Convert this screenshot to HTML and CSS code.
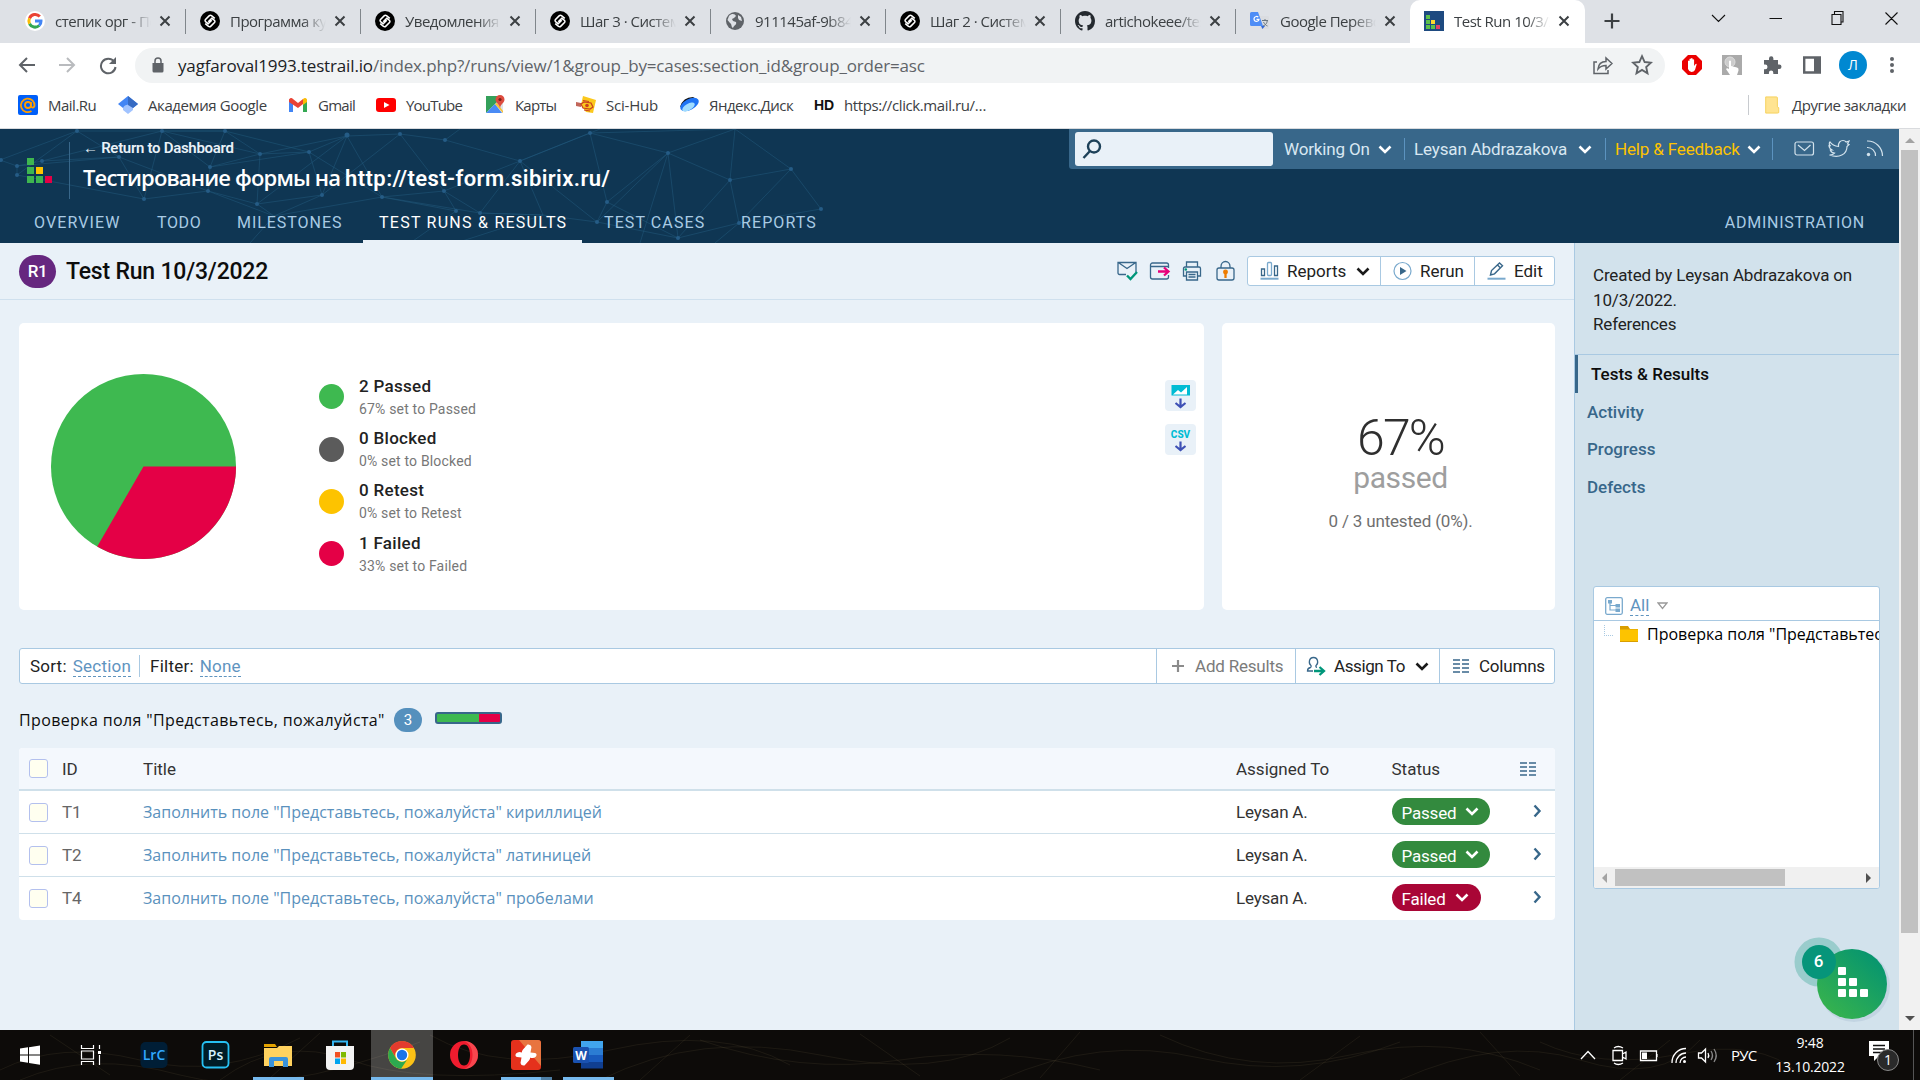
FILE: index.html
```html
<!DOCTYPE html>
<html lang="ru">
<head>
<meta charset="utf-8">
<title>Test Run 10/3/2022 - TestRail</title>
<link rel="stylesheet" href="styles.css">
</head>
<body>
<svg class="sprite" aria-hidden="true">
  <symbol id="stepik" viewBox="0 0 20 20"><circle cx="10" cy="10" r="10" fill="#000"/><path d="M14.800 7.300 11.500 4.600Q10.200 3.800 9.100 4.900L5.300 8.600Q4.500 10 5.800 10.900L8.200 12.700 11.800 9.300M5.200 12.700 8.500 15.400Q9.800 16.200 10.900 15.100L14.700 11.400Q15.500 10 14.200 9.100L11.800 7.300 8.200 10.700" fill="none" stroke="#fff" stroke-width="1.500"/></symbol>
  <symbol id="x" viewBox="0 0 12 12"><path d="M1.500 1.500l9 9M10.500 1.500l-9 9" stroke="#3c4043" stroke-width="2"/></symbol>
  <symbol id="chev" viewBox="0 0 14 9"><path d="M1.500 1.500 7 7l5.500-5.500" fill="none" stroke="currentColor" stroke-width="2.600"/></symbol>
  <symbol id="cols" viewBox="0 0 17 14"><path d="M0 1h7M9 1h7M0 5h7M9 5h7M0 9h7M9 9h7M0 13h7M9 13h7" stroke="#38678a" stroke-width="1.300"/></symbol>
</svg>

<div class="tabs">
  <div class="tab"><svg class="fav" viewBox="0 0 20 20"><circle cx="10" cy="10" r="10" fill="#fff"/><g fill="none" stroke-width="3"><path d="M14.800 5.500A6.200 6.200 0 0 0 4.500 7.300" stroke="#ea4335"/><path d="M4.500 7.300a6.300 6.300 0 0 0 0 5.400" stroke="#fbbc05"/><path d="M4.500 12.700a6.200 6.200 0 0 0 9.700 1.800" stroke="#34a853"/><path d="M14.200 14.500A6 6 0 0 0 16 10h-6" stroke="#4285f4"/></g></svg><span class="tab-text">степик орг - По</span><svg class="tab-x"><use href="#x"/></svg></div>
  <div class="tab"><svg class="fav"><use href="#stepik"/></svg><span class="tab-text">Программа курса</span><svg class="tab-x"><use href="#x"/></svg></div>
  <div class="tab"><svg class="fav"><use href="#stepik"/></svg><span class="tab-text">Уведомления</span><svg class="tab-x"><use href="#x"/></svg></div>
  <div class="tab"><svg class="fav"><use href="#stepik"/></svg><span class="tab-text">Шаг 3 · Система</span><svg class="tab-x"><use href="#x"/></svg></div>
  <div class="tab"><svg class="fav" viewBox="0 0 20 20"><circle cx="10" cy="10" r="9" fill="#5f6368"/><path d="M4 5c3-3 6-2 7 0l-2 2-2 1 1 2 3 1c1 3-2 3-3 6-2-1-1-4-3-5L2.500 9zM13 4l3 2 1 4-3-1-1-2z" fill="#dee1e6"/></svg><span class="tab-text">911145af-9b84-</span><svg class="tab-x"><use href="#x"/></svg></div>
  <div class="tab"><svg class="fav"><use href="#stepik"/></svg><span class="tab-text">Шаг 2 · Система</span><svg class="tab-x"><use href="#x"/></svg></div>
  <div class="tab"><svg class="fav" viewBox="0 0 16 16"><path fill="#24292f" d="M8 0C3.580 0 0 3.580 0 8c0 3.540 2.290 6.530 5.470 7.590.4.070.55-.17.55-.38 0-.19-.01-.82-.01-1.490-2.010.37-2.530-.49-2.690-.94-.09-.23-.48-.94-.82-1.130-.28-.15-.68-.52-.01-.53.63-.01 1.080.58 1.230.82.72 1.210 1.870.87 2.330.66.070-.52.28-.87.51-1.070-1.780-.2-3.640-.89-3.640-3.950 0-.87.31-1.590.82-2.150-.08-.2-.36-1.020.08-2.120 0 0 .67-.21 2.200.82.64-.18 1.320-.27 2-.27s1.360.09 2 .27c1.530-1.040 2.200-.82 2.200-.82.44 1.100.16 1.920.08 2.120.51.56.82 1.270.82 2.150 0 3.070-1.870 3.750-3.650 3.950.29.25.54.73.54 1.480 0 1.070-.01 1.930-.01 2.200 0 .21.15.46.55.38A8 8 0 0 0 16 8c0-4.420-3.580-8-8-8z"/></svg><span class="tab-text">artichokeee/test</span><svg class="tab-x"><use href="#x"/></svg></div>
  <div class="tab last"><svg class="fav" viewBox="0 0 20 20"><path d="M8 5h10a1 1 0 0 1 1 1v11a1 1 0 0 1-1 1h-7z" fill="#dadce0"/><path d="M12 9.500h6M15 8v1.500M13 15c3-1 4-3 4.300-5.500M13.500 11c1 2 2.500 3.500 4 4" stroke="#6b7780" fill="none"/><path d="M11 15h4l-2.500 3z" fill="#3367d6"/><path d="M1.500 1H8l5 14H1.500A1.500 1.500 0 0 1 0 13.500v-11A1.500 1.500 0 0 1 1.500 1z" fill="#4e8df6"/><path d="M8.300 6.200A2.500 2.500 0 1 0 9 8.300H6.500" stroke="#fff" fill="none" stroke-width="1.200"/></svg><span class="tab-text">Google Перевод</span><svg class="tab-x"><use href="#x"/></svg></div>
  <div class="tab active"><svg class="fav" viewBox="0 0 20 20"><path d="M0 0h20v20H0z" fill="#1e4a80"/><path d="M2 4h4v4H2zM2 9h4v4H2zM2 14h4v4H2zM7 14h4v4H7z" fill="#5dc04a"/><path d="M7 9h4v4H7z" fill="#ffd62e"/><path d="M12 14h4v4h-4z" fill="#e0426a"/></svg><span class="tab-text">Test Run 10/3/2</span><svg class="tab-x"><use href="#x"/></svg></div>
  <svg class="newtab" viewBox="0 0 16 16"><path d="M8 .5v15M.5 8h15" stroke="#3c4043" stroke-width="2.200"/></svg>
  <svg class="winctl" viewBox="0 0 200 20" fill="none" stroke="#111" stroke-width="1.100"><path d="M7 7l6.500 6.500L20 7M64.500 10.500H77M127 6.500h9v10h-9zM129.500 6v-2.500h8.500v10.500h-2M180.500 4.500l12 12M192.500 4.500l-12 12"/></svg>
</div>

<div class="toolbar">
  <svg class="navicons" viewBox="0 0 100 20" fill="none" stroke="#5f6368" stroke-width="2"><path d="M17 10H2M9 3l-7 7 7 7"/><path d="M41 10h15M49 3l7 7-7 7" stroke="#b9bbbe"/><path d="M96 6.500A7.300 7.300 0 1 0 97.500 12"/><path d="M98 2v7h-7z" fill="#5f6368" stroke="none"/></svg>
  <div class="omnibox">
    <svg class="lock" viewBox="0 0 12 16"><path d="M.5 6h11v8a1.500 1.500 0 0 1-1.500 1.500H2A1.500 1.500 0 0 1 .5 14z" fill="#5f6368"/><path d="M3 6.500V4a3 3 0 0 1 6 0v2.500" fill="none" stroke="#5f6368" stroke-width="1.500"/></svg>
    <span class="url"><b>yagfaroval1993.testrail.io</b>/index.php?/runs/view/1&amp;group_by=cases:section_id&amp;group_order=asc</span>
    <svg class="share" viewBox="0 0 20 20" fill="none" stroke="#5f6368" stroke-width="1.500"><path d="M4 7H1v11.500h14V15M5 14c.5-5 3.500-7.500 8-7.500V3l6 5.500-6 5.500v-3.500c-4 0-6 1-8 3.500z"/></svg>
    <svg class="star" viewBox="0 0 20 20" fill="none" stroke="#5f6368" stroke-width="1.700"><path d="M10 2l2.400 5.300 5.700.6-4.300 3.900 1.200 5.700-5-3-5 3 1.200-5.700L1.900 7.900l5.700-.6z"/></svg>
  </div>
  <div class="exts">
    <svg viewBox="0 0 20 20"><path d="M6 0h8l6 6v8l-6 6H6l-6-6V6z" fill="#eb0000"/><path d="M6 10V6q.8-1 1.500 0V4q.8-1 1.500 0V3.500q.8-1 1.600 0V4.500q.9-.8 1.500.3V11l1.500-2q1.200-.5 1 .6L13 15q-1.200 2-3.500 2T6 14z" fill="#fff"/></svg>
    <svg viewBox="0 0 20 20"><path d="M0 0h20v20H0z" fill="#aaa"/><circle cx="8" cy="7" r="5" fill="#ccc" stroke="#ddd"/><path d="M7 6q1-1 2 0v5l6 1.500q2 .5 1.500 3L15 20H8l-4-6q1-1.500 3 0z" fill="#fff"/></svg>
    <svg viewBox="0 0 20 20"><path d="M2 5h5V3.500a2.200 2.200 0 0 1 4.400 0V5H16v4.500h1.300a2.200 2.200 0 0 1 0 4.400H16V19h-4.700v-1.200a2.200 2.200 0 0 0-4.400 0V19H2v-4.800h1.200a2.300 2.300 0 0 0 0-4.600H2z" fill="#5f6368"/></svg>
    <svg viewBox="0 0 20 20"><path d="M2.200 2.500h15.600v15H2.200z" fill="none" stroke="#5f6368" stroke-width="2.400"/><path d="M12 2h6v16h-6z" fill="#5f6368"/></svg>
    <span class="avatar">Л</span>
    <svg viewBox="0 0 20 20" fill="#5f6368"><circle cx="10" cy="4" r="2"/><circle cx="10" cy="10" r="2"/><circle cx="10" cy="16" r="2"/></svg>
  </div>
</div>

<div class="bookmarks">
  <div class="bm bm-mail"><svg viewBox="0 0 20 20"><rect width="20" height="20" rx="2" fill="#005ff9"/><circle cx="10" cy="10" r="3" fill="none" stroke="#ff9e00" stroke-width="1.800"/><path d="M13 7v4.500q2 2.500 3.500-.5a6.800 6.800 0 1 0-3 5" fill="none" stroke="#ff9e00" stroke-width="1.800"/></svg><span>Mail.Ru</span></div>
  <div class="bm bm-scholar"><svg viewBox="0 0 20 20"><path d="M5 10h10v5l-5 4-5-4z" fill="#a0c3ff"/><path d="M10 1l10 8-5 4a5.500 5.500 0 0 0-10 0L0 9z" fill="#4285f4"/><path d="M10 1l10 8-5 4-5-3z" fill="#356ac3"/></svg><span>Академия Google</span></div>
  <div class="bm bm-gmail"><svg viewBox="0 0 20 20"><path d="M1 4v13h4V9z" fill="#4285f4"/><path d="M19 4v13h-4V9z" fill="#34a853"/><path d="M1 4.500Q3 2 5 4l5 4 5-4v5l-5 4-9-6z" fill="#ea4335"/><path d="M15 4q2.500-2 4 .5V7l-4 3z" fill="#fbbc04"/></svg><span>Gmail</span></div>
  <div class="bm bm-youtube"><svg viewBox="0 0 20 20"><rect y="3" width="20" height="14" rx="3" fill="#f00"/><path d="M8 7l5.500 3L8 13z" fill="#fff"/></svg><span>YouTube</span></div>
  <div class="bm bm-maps"><svg viewBox="0 0 20 20"><path d="M1 1h14v17H1z" fill="#34a05a"/><path d="M1 18L15 4l3 4v10z" fill="#dfe3e6"/><path d="M1 18l9-9 7 9z" fill="#4a8bf5"/><path d="M10 9l8 9V16l-6-8z" fill="#fbc02d"/><path d="M15 0a4.500 4.500 0 0 1 4.500 4.500C19.500 8 15.500 9 15 13c-.5-4-4.500-5-4.500-8.500A4.500 4.500 0 0 1 15 0z" fill="#dd4b3e"/><circle cx="15" cy="4.500" r="1.600" fill="#7a1f17"/></svg><span>Карты</span></div>
  <div class="bm bm-scihub"><svg viewBox="0 0 20 20"><path d="M7 1l13 4-3 13-7-1-5-7z" fill="#fbc81c"/><path d="M0 7l5 1v4l-5-1z" fill="#c2665a"/><path d="M5 9l3-2 7 1 2 4-3 2-7-1z" fill="none" stroke="#c8401f" stroke-width="1.200"/><circle cx="11" cy="10.500" r="1.800" fill="#c8401f"/><path d="M7 5.500l6 1M8 15l6 1" stroke="#c8401f"/></svg><span>Sci-Hub</span></div>
  <div class="bm bm-disk"><svg viewBox="0 0 20 20"><path d="M1 12Q4 2 14 2l5 3z" fill="#111"/><ellipse cx="10.500" cy="9.500" rx="10" ry="5.500" transform="rotate(-28 10.500 9.500)" fill="#1f74f5"/><ellipse cx="9.500" cy="12" rx="7" ry="3.300" transform="rotate(-30 9.500 12)" fill="#9fdcff"/></svg><span>Яндекс.Диск</span></div>
  <div class="bm"><span class="hd">HD</span><span>https://click.mail.ru/…</span></div>
  <div class="bm others"><svg viewBox="0 0 16 20"><path d="M1 1h12a1 1 0 0 1 1 1v10l1.500 1v5.500L14 19H1z" fill="#ffe491" stroke="#f5cf55"/></svg><span>Другие закладки</span></div>
</div>

<div class="viewport">
<div class="page">
  <div class="header">
    <svg class="mesh" viewBox="0 0 840 114" width="840" height="114"><g fill="none" stroke="#20577a" stroke-opacity=".55" stroke-width="1"><path d="M0 31 77 2 17 46 17 37 42 32 162 2 77 2 119 28 42 32M0 31 17 37 119 28 144 70 162 2 210 38 225 2 162 2 260 25 225 2 309 23 260 25 210 38 208 62 119 28M144 70 208 62 257 75 260 25 347 7 309 23 210 38M208 62 274 87 257 75 347 7 322 66 309 23 382 68M274 87 322 66 400 5 347 7M225 2 162 2M400 5 445 11 520 32 444 62 382 68 347 7M400 5 444 62 456 82 382 68 480 84 520 32 543 86 480 84 444 62M382 68 274 87 250 114M456 82 410 114M480 84 543 86 597 93 520 32 590 4 607 73 597 93M445 11 460 0M590 4 520 32M590 4 668 24 607 73M590 4 735 0 668 24 730 51 791 40 735 0 730 51 678 109 668 24 640 114M791 40 821 80 739 94 791 40M730 51 739 94 678 109 607 73M739 94 715 114M597 93 678 109M543 86 456 114M590 4 600 0M144 70 17 46M257 75 322 66M668 24 597 93"/></g><g fill="#255c86"><circle cx="77" cy="2" r="2"/><circle cx="162" cy="2" r="2"/><circle cx="225" cy="2" r="2"/><circle cx="347" cy="6" r="2.500"/><circle cx="1" cy="31" r="2"/><circle cx="17" cy="37" r="2"/><circle cx="42" cy="32" r="2"/><circle cx="17" cy="46" r="2"/><circle cx="119" cy="28" r="2"/><circle cx="260" cy="25" r="2"/><circle cx="309" cy="23" r="2"/><circle cx="210" cy="38" r="2"/><circle cx="208" cy="62" r="2"/><circle cx="144" cy="70" r="2"/><circle cx="257" cy="75" r="2"/><circle cx="322" cy="66" r="2"/><circle cx="400" cy="5" r="2"/><circle cx="445" cy="11" r="2"/><circle cx="520" cy="32" r="2"/><circle cx="444" cy="62" r="2"/><circle cx="382" cy="68" r="2"/><circle cx="456" cy="82" r="2"/><circle cx="480" cy="84" r="2"/><circle cx="590" cy="4" r="2"/><circle cx="607" cy="73" r="2"/><circle cx="597" cy="93" r="2"/><circle cx="668" cy="24" r="2"/><circle cx="791" cy="40" r="2"/><circle cx="730" cy="51" r="2"/><circle cx="821" cy="80" r="2"/><circle cx="739" cy="94" r="2"/><circle cx="678" cy="109" r="2"/></g></svg>
    <div class="brand">
      <svg class="logo" viewBox="0 0 25 25"><path d="M0 0h7v7H0zM0 9h7v7H0zM0 18h7v7H0zM9 18h7v7H9z" fill="#3eb650"/><path d="M9 9h7v7H9z" fill="#fdc300"/><path d="M18 18h7v7h-7z" fill="#e40046"/></svg>
      <div class="brand-text">
        <a class="return">← Return to Dashboard</a>
        <div class="project"><span class="cyr">Тестирование формы на</span><span>http://test-form.sibirix.ru/</span></div>
      </div>
    </div>
    <div class="topbar">
      <div class="search"><svg viewBox="0 0 20 20" fill="none" stroke="#1d4159" stroke-width="2.400"><circle cx="12" cy="7.500" r="6"/><path d="M8 12l-6.500 7"/></svg></div>
      <div class="tb-item working"><span>Working On</span><svg class="chev"><use href="#chev"/></svg></div>
      <div class="tb-item user"><span>Leysan Abdrazakova</span><svg class="chev"><use href="#chev"/></svg></div>
      <div class="tb-item help"><span>Help &amp; Feedback</span><svg class="chev"><use href="#chev"/></svg></div>
      <svg class="social" viewBox="0 0 92 20" fill="none" stroke="#d2e2ec" stroke-width="1.200"><rect x="1" y="3" width="18.500" height="13" rx="2"/><path d="M4 6l6.500 5.500L16.500 6M36 3c2 3 4 4 8.500 4.500-.5-4 2-6 4.500-6 1.500 0 2.500.7 3.200 1.500L55 2l-1.500 3 1.500.5-2 2c0 8-8 12-17.500 8.500 2 0 4-.5 5-1.800-2-.2-3.500-1.200-4.200-3.200h1.800C36.500 10 35 8.500 35 6.500l1.600.5C35 5.500 35 4 36 3zM73 8.500A8 8 0 0 1 81.500 17M73 2a15 15 0 0 1 15.500 15"/><circle cx="74.500" cy="15.500" r="1.700" fill="#d2e2ec" stroke="none"/></svg>
    </div>
    <div class="nav">
      <a class="n-over">OVERVIEW</a><a class="n-todo">TODO</a><a class="n-mile">MILESTONES</a><a class="on">TEST RUNS &amp; RESULTS</a><a class="n-cases">TEST CASES</a><a>REPORTS</a><a class="admin">ADMINISTRATION</a>
    </div>
  </div>

  <div class="body">
    <div class="main">
      <div class="pagehead">
        <span class="rbadge">R1</span><h1>Test Run 10/3/2022</h1>
        <svg class="acts" viewBox="0 0 120 24" fill="none" stroke="#38678a" stroke-width="1.300"><path d="M9 15.500H2.500A1.500 1.500 0 0 1 1 14V3.500h18V13M2 4l8 5.500L18 4"/><path d="M10 16.500l3.500 3.500 6.500-7" stroke="#00967a" stroke-width="2.400"/><path d="M51.500 9V6a2 2 0 0 0-2-2h-14a2 2 0 0 0-2 2v12a2 2 0 0 0 2 2h14a2 2 0 0 0 2-2v-2M33.500 7.500h18"/><path d="M41 12.500h9.500M47 8.500l4.500 4-4.500 4" stroke="#e6007a" stroke-width="2.300"/><path d="M69.500 8V3h11v5M69 17h-2.500V9.500Q66.500 8 68 8h14q1.500 0 1.500 1.500V17H81M69.500 13h11v8h-11zM71.500 15.500h7M71.500 18h7"/><circle cx="68.800" cy="10.500" r=".7" stroke="#00967a"/><rect x="100" y="9" width="17" height="12" rx="2"/><path d="M104 9V7.500a4.500 5 0 0 1 9 0V9"/><circle cx="108.500" cy="13" r="1.800" fill="#ee7d00" stroke="#ee7d00"/><path d="M108.500 13v6" stroke="#ee7d00" stroke-width="2.300"/></svg>
        <div class="btns">
          <div class="b-reports"><svg viewBox="0 0 19 20" fill="none"><path d="M1.500 8h3v6.500h-3z M14.500 5h3v9.500h-3z" stroke="#38678a" stroke-width="1.300"/><rect x="7.500" y="1.500" width="4" height="13" rx="1" stroke="#79a9cd" stroke-width="1.300"/><path d="M.5 17.700h18" stroke="#79a9cd" stroke-width="2"/></svg><span>Reports</span><svg class="chev"><use href="#chev"/></svg></div>
          <div class="b-rerun"><svg viewBox="0 0 19 19"><circle cx="9.500" cy="9.500" r="8.500" fill="none" stroke="#79a9cd" stroke-width="1.200"/><path d="M7 5.500l6.500 4-6.500 4z" fill="#38678a"/></svg><span>Rerun</span></div>
          <div class="b-edit"><svg viewBox="0 0 19 20" fill="none"><path d="M3.500 14l1-4.500 8-7.500 3 2.800-8 8zM10.500 4l3 3" stroke="#38678a" stroke-width="1.400"/><path d="M.5 17.700h18" stroke="#79a9cd" stroke-width="2"/></svg><span>Edit</span></div>
        </div>
      </div>

      <div class="cards">
        <div class="card chart">
          <svg class="pie" viewBox="-92.500 -92.500 185 185"><circle r="92.500" fill="#3eb950"/><path d="M0 0H92.500A92.500 92.500 0 0 1-46.250 80.100z" fill="#e40046"/></svg>
          <div class="legend">
            <div><i class="c-pass"></i><p><b>2 Passed</b><small>67% set to Passed</small></p></div>
            <div><i class="c-block"></i><p><b>0 Blocked</b><small>0% set to Blocked</small></p></div>
            <div><i class="c-retest"></i><p><b>0 Retest</b><small>0% set to Retest</small></p></div>
            <div><i class="c-fail"></i><p><b>1 Failed</b><small>33% set to Failed</small></p></div>
          </div>
          <div class="exports">
            <svg viewBox="0 0 31 31"><path d="M6.500 5h18.500v10.500H6.500z" fill="#00bcd4"/><path d="M8 14.500l5-4.500 3 2.500 6-5.500v7.500z" fill="#fff"/><path d="M15.500 18.500v8M10.500 23l5 4 5-4" fill="none" stroke="#3f51b5" stroke-width="2.200"/></svg>
            <svg viewBox="0 0 31 31"><text x="15.500" y="14.300" text-anchor="middle" class="csv">CSV</text><path d="M15.500 17.500v8M10.500 22l5 4 5-4" fill="none" stroke="#3f51b5" stroke-width="2.200"/></svg>
          </div>
        </div>
        <div class="card pct"><strong>67%</strong><em>passed</em><p>0 / 3 untested (0%).</p></div>
      </div>

      <div class="gridbar">
        <span>Sort:</span><a>Section</a><i></i><span>Filter:</span><a>None</a>
        <div class="gb add"><svg viewBox="0 0 14 14"><path d="M7 1v12M1 7h12" stroke="#8b8b8b" stroke-width="2.200"/></svg><span>Add Results</span></div>
        <div class="gb assign"><svg viewBox="0 0 20 20" fill="none"><path d="M7 15H1.500q0-3 3-3.500Q5.500 11 5 9.500C2.500 8 2.500 1.500 7.500 1.500S12.500 8 10 9.500q-.5 1.500 1 2" stroke="#38678a" stroke-width="1.300"/><path d="M8 15h9M13.500 11l4.500 4-4.500 4" stroke="#00967a" stroke-width="2.300"/></svg><span>Assign To</span><svg class="chev"><use href="#chev"/></svg></div>
        <div class="gb colsbtn"><svg><use href="#cols"/></svg><span>Columns</span></div>
      </div>

      <div class="grouphead"><h2 class="cyr">Проверка поля "Представьтесь, пожалуйста"</h2><span class="count">3</span><span class="mini"></span></div>

      <div class="table">
        <div class="row head"><i class="cb"></i><span>ID</span><span>Title</span><span>Assigned To</span><span>Status</span><svg class="cols"><use href="#cols"/></svg></div>
        <div class="row"><i class="cb"></i><span class="id">T1</span><a class="cyr">Заполнить поле "Представьтесь, пожалуйста" кириллицей</a><span>Leysan A.</span><span class="pill"><b>Passed</b><svg class="chev"><use href="#chev"/></svg></span><svg class="go" viewBox="0 0 9 14"><path d="M1.500 1.500l5 5.500-5 5.500" fill="none" stroke="#38678a" stroke-width="2.400"/></svg></div>
        <div class="row"><i class="cb"></i><span class="id">T2</span><a class="cyr">Заполнить поле "Представьтесь, пожалуйста" латиницей</a><span>Leysan A.</span><span class="pill"><b>Passed</b><svg class="chev"><use href="#chev"/></svg></span><svg class="go" viewBox="0 0 9 14"><path d="M1.500 1.500l5 5.500-5 5.500" fill="none" stroke="#38678a" stroke-width="2.400"/></svg></div>
        <div class="row"><i class="cb"></i><span class="id">T4</span><a class="cyr">Заполнить поле "Представьтесь, пожалуйста" пробелами</a><span>Leysan A.</span><span class="pill failed"><b>Failed</b><svg class="chev"><use href="#chev"/></svg></span><svg class="go" viewBox="0 0 9 14"><path d="M1.500 1.500l5 5.500-5 5.500" fill="none" stroke="#38678a" stroke-width="2.400"/></svg></div>
      </div>
    </div>

    <div class="side">
      <div class="info">Created by Leysan Abdrazakova on<br>10/3/2022.<br>References</div>
      <a class="sl on">Tests &amp; Results</a><a class="sl">Activity</a><a class="sl">Progress</a><a class="sl">Defects</a>
      <div class="tree">
        <div class="treehead"><svg viewBox="0 0 18 18" fill="none" stroke="#79a9cd"><rect x=".7" y=".7" width="16.600" height="16.600" rx="1.500" stroke-width="1.300"/><path d="M5 5v8h6M5 8.500h6" stroke-width="1.200"/><path d="M3 3h4v3.500H3zM10.500 7H15v3.500h-4.500zM10.500 11.500H15V15h-4.500z" fill="#79a9cd" stroke="none"/></svg><a>All</a><svg class="tri" viewBox="0 0 11 8"><path d="M1 1h9L5.500 6.500z" fill="none" stroke="#999" stroke-width="1.300"/></svg></div>
        <div class="treeitem"><i></i><svg viewBox="0 0 18 16"><path d="M0 0h8l2 3h8v13H0z" fill="#d99e00"/><path d="M0 3.500h18V15H0z" fill="#fdc300"/></svg><span class="cyr">Проверка поля "Представьтесь, пожалуйста"</span></div>
        <div class="hscroll"><i class="l"></i><b></b><i class="r"></i></div>
      </div>
    </div>
  </div>
  <svg class="fab" viewBox="0 0 110 100"><defs><linearGradient id="g" x1=".15" y1=".9" x2=".85" y2=".1"><stop offset="0" stop-color="#36b24e"/><stop offset="1" stop-color="#06956f"/></linearGradient></defs><circle cx="28" cy="32" r="24.500" fill="#06957a" fill-opacity=".28"/><circle cx="63" cy="56" r="36" fill="#5a7fa0" fill-opacity=".13"/><circle cx="61" cy="54" r="35" fill="url(#g)"/><g fill="#fff"><rect x="47" y="37" width="8" height="8" rx="1"/><rect x="47" y="48" width="8" height="8" rx="1"/><rect x="58" y="48" width="8" height="8" rx="1"/><rect x="47" y="59" width="8" height="8" rx="1"/><rect x="58" y="59" width="8" height="8" rx="1"/><rect x="69" y="59" width="8" height="8" rx="1"/></g><circle cx="28" cy="32" r="17" fill="#06957a"/><text x="27.500" y="37" text-anchor="middle" class="fabn">6</text></svg>
</div>
<div class="vscroll"><i class="up"></i><b></b><i class="down"></i></div>
</div>

<div class="taskbar">
  <svg class="grass" viewBox="0 0 1920 50" preserveAspectRatio="none" fill="none" stroke="#8b7a55" stroke-opacity=".13"><path d="M0 40Q60 10 140 30T300 8M20 50Q90 20 180 45T420 12M220 50Q280 5 350 30T560 40M430 5Q500 45 610 20T790 35M600 50Q700 0 820 25T1010 8M700 10Q800 45 900 30T1100 40M1000 50Q1100 5 1200 28T1400 12M1160 5Q1250 48 1350 25T1540 40M1400 50Q1500 5 1580 30T1700 10M1540 12Q1600 40 1680 24T1800 44M50 5l60 40M320 3l-50 45M640 50l50-45M860 4l60 42M1080 2l-40 46M1300 50l60-44M1480 2l40 44M1620 50l50-40"/></svg>
  <div class="apps">
    <div class="app"><svg viewBox="0 0 30 30"><path d="M5 8.500l8-1.200V14.500H5zM14 7.200l11-1.700v9H14zM5 15.500h8v7.200l-8-1.200zM14 15.500h11v9.200l-11-1.800z" fill="#fff"/></svg></div>
    <div class="app"><svg viewBox="0 0 30 30" fill="none" stroke="#fff" stroke-width="1.200"><path d="M4.500 5v3.500h12V5M4.500 25v-3.500h12V25M4.500 11h12v8h-12zM22.500 5v4M22.500 15v10"/><path d="M21 11h3v3h-3z" fill="#fff" stroke="none"/></svg></div>
    <div class="app"><svg viewBox="0 0 30 30"><rect x="1.500" y="2" width="27" height="26" rx="5" fill="#001e36"/><text x="15" y="20" text-anchor="middle" class="adobe lr">LrC</text></svg></div>
    <div class="app"><svg viewBox="0 0 30 30"><rect x="1.500" y="2" width="26" height="25.500" rx="4" fill="#001c26" stroke="#26c0f2" stroke-width="1.800"/><text x="14.500" y="20" text-anchor="middle" class="adobe">Ps</text></svg></div>
    <div class="app run"><svg viewBox="0 0 30 30"><path d="M1 4h11l2 3H1z" fill="#e2a200"/><path d="M1 8h13l2-2h13v20H1z" fill="#ffd25f"/><path d="M6 27v-8q0-2 2-2h15q2 0 2 2v8h-5v-6h-9v6z" fill="#3b93db"/></svg></div>
    <div class="app"><svg viewBox="0 0 30 30"><path d="M8 8V1.500h14V8" fill="none" stroke="#35b6f2" stroke-width="2"/><path d="M1 6h28v20q0 4-4 4H5q-4 0-4-4z" fill="#f3f3f3"/><path d="M10 12h5v5.500h-5z" fill="#f25022"/><path d="M16 12h5v5.500h-5z" fill="#7fba00"/><path d="M10 18.500h5V24h-5z" fill="#00a4ef"/><path d="M16 18.500h5V24h-5z" fill="#ffb900"/></svg></div>
    <div class="app cur"><svg viewBox="0 0 30 30"><circle cx="15" cy="15" r="13.800" fill="#fbc116"/><path d="M3 8.100A13.800 13.800 0 0 1 27 8.100H15a7 7 0 0 0-6.200 10z" fill="#e33b2e"/><path d="M3 8.100A13.800 13.800 0 0 0 14 28.800l6.500-9.500a7 7 0 0 1-11.600-1z" fill="#2da94f"/><circle cx="15" cy="15" r="6.500" fill="#fff"/><circle cx="15" cy="15" r="5.200" fill="#1a73e8"/></svg></div>
    <div class="app"><svg viewBox="0 0 30 30"><path fill-rule="evenodd" d="M15 1a14 14 0 1 0 0 28 14 14 0 0 0 0-28zm0 3.500c4 0 6 5 6 10.500s-2 10.500-6 10.500S9 20.500 9 15 11 4.500 15 4.500z" fill="#ef1c2e"/><path d="M15 1a14 14 0 0 1 0 28c6-2 8.500-8 8.500-14S21 3 15 1z" fill="#ff6a6a" fill-opacity=".55"/></svg></div>
    <div class="app run two"><svg viewBox="0 0 30 30"><rect width="30" height="30" rx="3" fill="#e5311c"/><path d="M8 0h19q3 0 3 3v23z" fill="#e8743f"/><path d="M16.500 4.500q3.500-.5 4 2.500l-1 5.500 4.500.5q2.500.8 1 3.500-2.500 2.500-6 1l-6.500-2.500q-3-2.500-.5-5.500zM13.500 25.500q-3.500.5-4-2.500l1-5.500L6 17q-2.500-.8-1-3.500 2.500-2.500 6-1l6.500 2.500q3 2.500.5 5.500z" fill="#fff"/></svg></div>
    <div class="app run"><svg viewBox="0 0 30 30"><path d="M8 1h22v7H8z" fill="#41a5ee"/><path d="M8 8h22v7H8z" fill="#2b7cd3"/><path d="M8 15h22v7H8z" fill="#185abd"/><path d="M8 22h22v6.500H8z" fill="#103f91"/><rect x="0" y="7" width="16" height="16" rx="1.500" fill="#1a52b0"/><text x="8" y="19.500" text-anchor="middle" class="wd">W</text></svg></div>
  </div>
  <svg class="tray" viewBox="0 0 144 24" fill="none" stroke="#fff" stroke-width="1.300"><path d="M1 16l7-7.500 7 7.500M33 7.500h9.500v10H33zM42.500 11l3.500-2v7l-3.500-2M34 5q4-3 9 0M34 20q4 3 9 0M60.500 8h16v9.500h-16zM77 11v3"/><path d="M62 9.500h5v6.500h-5z" fill="#fff" stroke="none"/><path d="M92 20A14 14 0 0 1 106 5.500M96 20a10 10 0 0 1 10-10M100 20a6 6 0 0 1 6-6"/><circle cx="104.500" cy="18.500" r="1.500" fill="#fff" stroke="none"/><path d="M118.500 10h3l4-4v13l-4-4h-3zM128 10q1.500 2.500 0 5"/><path d="M131 8q3 4.500 0 9M134 6q4.500 6.500 0 13" stroke="#888"/></svg>
  <span class="lang">РУС</span>
  <div class="clock"><span>9:48</span><span>13.10.2022</span></div>
  <svg class="notif" viewBox="0 0 34 34"><path d="M2 3h20v15H12l-5 5v-5H2z" fill="#fff"/><path d="M6 7.500h12M6 11h12M6 14.500h8" stroke="#111" stroke-width="1.300"/><circle cx="21" cy="22" r="10.500" fill="#2a2a2a" stroke="#888"/><text x="21" y="27" text-anchor="middle" class="nn">1</text></svg>
  <i class="peek"></i>
</div>
</body>
</html>
```
FILE: styles.css
```css
* { box-sizing: border-box; }
body { margin: 0; width: 1920px; height: 1080px; overflow: hidden; display: flex; flex-direction: column; font-family: Roboto, "Liberation Sans", sans-serif; font-size: 17px; background: #fff; color: #202124; }
svg { display: block; flex: none; }
a { text-decoration: none; }
.sprite { position: absolute; width: 0; height: 0; }
.cyr { font-family: "Open Sans", "Noto Sans", sans-serif; }

/* browser chrome */
.tabs, .toolbar, .bookmarks, .taskbar { font-family: "Open Sans", "Noto Sans", sans-serif; }
.tabs { height: 43px; background: #dee1e6; display: flex; align-items: center; padding-left: 11px; flex: none; }
.tab { width: 175px; height: 43px; display: flex; align-items: center; padding: 0 14px 2px; position: relative; flex: none; }
.tab::after { content: ""; position: absolute; right: 0; top: 9px; width: 1px; height: 25px; background: #80868b; }
.tab.last::after, .tab.active::after { display: none; }
.fav { width: 20px; height: 20px; }
.tab-text { width: 96px; margin-left: 10px; font-size: 15px; letter-spacing: -0.5px; white-space: nowrap; overflow: hidden; color: #3c4043; -webkit-mask-image: linear-gradient(90deg, #000 75%, transparent); mask-image: linear-gradient(90deg, #000 75%, transparent); }
.tab-x { width: 12px; height: 12px; margin-left: 8px; }
.tab.active { background: #fff; border-radius: 10px 10px 0 0; margin-left: -1px; }
.newtab { width: 16px; height: 16px; margin: 0 0 2px 19px; }
.winctl { width: 200px; height: 20px; margin: 0 15px 7px auto; }
.toolbar { height: 44px; display: flex; align-items: center; padding-left: 18px; flex: none; }
.navicons { width: 100px; height: 20px; }
.omnibox { width: 1530px; height: 35px; margin-left: 17px; background: #f1f3f4; border-radius: 18px; display: flex; align-items: center; padding-left: 17px; }
.lock { width: 12px; height: 16px; }
.url { margin-left: 14px; font-size: 17px; letter-spacing: -0.15px; color: #5f6368; }
.url b { font-weight: 400; color: #202124; }
.share { width: 20px; height: 20px; margin-left: auto; }
.star { width: 22px; height: 22px; margin: 0 12px 0 18px; }
.exts { display: flex; align-items: center; gap: 20px; margin-left: 17px; }
.exts svg { width: 20px; height: 20px; }
.exts svg:last-child { margin-left: -3px; }
.avatar { width: 28px; height: 28px; border-radius: 50%; background: #0088d1; color: #fff; font-size: 14px; line-height: 28px; text-align: center; margin: 0 -2px 0 -3px; }
.bookmarks { height: 42px; border-bottom: 1px solid #d9dbde; display: flex; align-items: center; padding: 0 14px 6px 18px; flex: none; font-size: 15px; }
.bm { display: flex; align-items: center; gap: 10px; white-space: nowrap; color: #3c4043; letter-spacing: -0.5px; flex: none; }
.bm svg { width: 20px; height: 20px; }
.bm-mail { width: 100px; }
.bm-scholar { width: 170px; letter-spacing: -0.4px; }
.bm-gmail { width: 88px; letter-spacing: -0.75px; }
.bm-youtube { width: 109px; letter-spacing: -0.8px; }
.bm-maps { width: 91px; letter-spacing: -0.8px; }
.bm-scihub { width: 103px; letter-spacing: -0.2px; }
.bm-disk { width: 135px; }
.bm:nth-child(8) { letter-spacing: -0.4px; }
.hd { font-family: "Liberation Sans", sans-serif; font-weight: 700; font-size: 14px; color: #111; width: 20px; letter-spacing: 0; }
.others { margin-left: auto; border-left: 1px solid #c8cbcf; padding-left: 15px; gap: 12px; }
.others svg { width: 16px; height: 18px; }

/* page */
.viewport { display: flex; height: 901px; flex: none; }
.page { width: 1899px; display: flex; flex-direction: column; position: relative; }
.header { height: 114px; background: #0f3653; position: relative; display: grid; grid-template: 70px 44px / 1069px 830px; flex: none; }
.mesh { position: absolute; left: 0; top: 0; }
.brand { display: flex; padding-left: 27px; position: relative; }
.logo { width: 25px; height: 25px; margin: 29px 17px 0 0; }
.brand-text { border-left: 1px solid #38678a; height: 57px; margin-top: 13px; padding-left: 13px; }
.return { display: block; color: #e9f1f8; font-weight: 600; font-size: 15px; line-height: 18px; letter-spacing: -0.3px; margin-top: -3px; white-space: nowrap; }
.project { color: #fff; font-weight: 600; font-size: 22px; line-height: 26px; letter-spacing: 0.4px; margin-top: 7px; white-space: nowrap; display: flex; align-items: baseline; gap: 5px; }
.project .cyr { letter-spacing: -0.84px; }
.topbar { height: 40px; background: #38678a; display: flex; align-items: center; padding-left: 6px; border-radius: 0 0 0 3px; }
.search { width: 198px; height: 34px; border-radius: 3px; background: #e9f1f8; padding: 7px; margin-right: 1px; }
.search svg { width: 20px; height: 20px; }
.tb-item { display: flex; align-items: center; height: 22px; padding-left: 9px; border-right: 1px solid #5c93bf; color: #d9e7f2; letter-spacing: -0.15px; white-space: nowrap; flex: none; }
.chev { width: 14px; height: 9px; margin-left: 8px; color: #fff; }
.working { width: 131px; padding-left: 10px; }
.user { width: 201px; }
.user .chev { margin-left: 11px; }
.help { width: 167px; color: #fdc300; }
.help .chev { margin-left: 7px; }
.social { width: 92px; height: 20px; margin-left: 21px; }
.nav { grid-column: 1 / 3; display: flex; padding-left: 18px; position: relative; color: #a9cbe4; font-size: 16px; line-height: 48px; letter-spacing: 1.1px; white-space: nowrap; }
.nav a { flex: none; height: 44px; padding-left: 16px; }
.n-over { width: 123px; }
.n-todo { width: 80px; letter-spacing: 0.6px; }
.n-mile { width: 142px; letter-spacing: 0.95px; }
.n-cases { width: 137px; }
.nav .on { width: 219px; margin-right: 6px; letter-spacing: 1.25px; color: #fff; border-bottom: 3px solid #e9f1f8; }
.nav .admin { margin-left: auto; padding-right: 34px; letter-spacing: 0.75px; }
.body { flex: 1; display: flex; background: #e9f1f8; }
.main { width: 1574px; display: flex; flex-direction: column; }
.pagehead { height: 57px; border-bottom: 1px solid #cfe0ee; display: flex; align-items: center; padding: 0 19px; flex: none; }
.rbadge { width: 37px; height: 33px; border-radius: 17px; background: #66277f; color: #fff; font-weight: 500; font-size: 17px; line-height: 33px; text-align: center; letter-spacing: -0.5px; }
h1 { margin: 1px 0 0 10px; font-weight: 500; font-size: 23px; letter-spacing: -0.2px; color: #0d0d0d; }
.acts { width: 120px; height: 24px; margin: 0 10px 0 auto; }
.btns { display: flex; height: 30px; border: 1px solid #a9c9e2; border-radius: 3px; background: #fff; color: #222; }
.btns > div { display: flex; align-items: center; padding-left: 12px; }
.btns > div + div { border-left: 1px solid #a9c9e2; }
.b-reports { width: 132px; }
.b-rerun { width: 94px; }
.b-edit { width: 80px; }
.btns svg:first-child { width: 19px; height: 20px; margin-right: 8px; }
.btns .chev, .assign .chev { color: #1a1a1a; margin-left: 10px; }
.cards { display: flex; gap: 18px; padding: 23px 19px 0; }
.card { background: #fff; border-radius: 5px; height: 287px; }
.chart { width: 1185px; display: flex; padding-left: 32px; }
.pie { width: 185px; height: 185px; margin-top: 51px; }
.legend { margin: 48px 0 0 83px; display: flex; flex-direction: column; }
.legend > div { display: flex; align-items: center; height: 52.400px; }
.legend i { width: 25px; height: 25px; border-radius: 50%; margin: -1px 15px 0 0; }
.legend p { margin: 0; }
.legend b { display: block; font-weight: 500; font-size: 17px; line-height: 23px; letter-spacing: 0.3px; color: #222; }
.legend small { display: block; font-size: 14px; line-height: 22px; letter-spacing: 0.17px; color: #777; }
.c-pass { background: #3eb950; } .c-block { background: #5b5b5b; } .c-retest { background: #fdc300; } .c-fail { background: #e40046; }
.exports { margin: 57px 8px 0 auto; display: flex; flex-direction: column; gap: 13px; }
.exports svg { width: 31px; height: 31px; background: #e9f1f8; border-radius: 4px; }
.csv { font: 800 10px Roboto, sans-serif; fill: #00bcd4; }
.pct { width: 333px; text-align: center; padding: 85px 0 0 24px; }
.pct strong { display: block; font-weight: 300; font-size: 50px; line-height: 60px; letter-spacing: -1.8px; color: #2f2f2f; }
.pct em { display: block; font-style: normal; font-size: 30px; line-height: 36px; letter-spacing: -0.45px; margin-top: -8px; color: #9e9e9e; }
.pct p { margin: 14px 0 0; line-height: 22px; letter-spacing: -0.17px; color: #6f6f6f; }
.gridbar { margin: 38px 19px 0; height: 36px; border: 1px solid #a9c9e2; border-radius: 3px; background: #fff; display: flex; align-items: center; padding-left: 10px; color: #222; flex: none; white-space: nowrap; }
.gridbar > span, .gridbar > a { letter-spacing: 0.22px; }
.gridbar > a, .treehead a { color: #5f94bf; border-bottom: 1px dashed #5f94bf; line-height: 20px; margin-left: 6px; }
.gridbar > i { width: 1px; height: 22px; background: #a9c9e2; margin: 0 10px 0 8px; }
.gb { display: flex; align-items: center; height: 34px; border-left: 1px solid #a9c9e2; letter-spacing: -0.2px; }
.gb svg:first-child { margin-right: 9px; }
.add { width: 139px; margin-left: auto; padding-left: 14px; color: #7b7b7b; }
.add svg:first-child { width: 14px; height: 14px; margin-right: 10px; }
.assign { width: 144px; padding-left: 10px; letter-spacing: -0.4px; }
.assign svg:first-child { width: 20px; height: 20px; margin-right: 8px; }
.colsbtn { width: 115px; padding-left: 13px; }
.colsbtn svg:first-child { width: 17px; height: 14px; }
.grouphead { display: flex; align-items: center; height: 64px; padding: 7px 19px 0; }
h2 { margin: 0; font-weight: 500; font-size: 16px; letter-spacing: 0.37px; color: #0d0d0d; white-space: nowrap; }
.count { width: 28px; height: 24px; border-radius: 12px; background: #5590bd; color: #fff; font-size: 15px; line-height: 25px; text-align: center; margin-left: 9px; }
.mini { width: 67px; height: 12px; border: 2px solid #38678a; border-radius: 3px; margin: -3px 0 0 13px; background: linear-gradient(90deg, #3eb950 66%, #e40046 66%); }
.table { margin: 0 19px; background: #fff; border-radius: 4px; overflow: hidden; }
.row { display: grid; grid-template-columns: 33px 81px 1093px 155.500px 128px 44px; align-items: center; height: 43px; padding-left: 10px; border-bottom: 1px solid #cfe0ea; color: #333; letter-spacing: -0.2px; white-space: nowrap; }
.row:last-child { border: 0; padding-bottom: 1px; }
.head { background: #f4f8fd; border-bottom-width: 2px; letter-spacing: 0; }
.row .cyr { color: #5a91bd; font-size: 16px; letter-spacing: 0; }
.cb { width: 19px; height: 19px; border: 1px solid #b3c0ee; border-radius: 3px; background: #fffff0; }
.id { color: #666; }
.head .cols { width: 17px; height: 14px; }
.pill { display: flex; align-items: center; height: 27px; width: 98px; border-radius: 14px; background: #338a3e; color: #fff; padding-left: 10px; margin-top: -1px; }
.pill b { font-weight: 400; padding-top: 2px; }
.pill .chev { margin-left: 9px; }
.failed { width: 89px; background: #a90636; }
.go { width: 9px; height: 14px; margin: -2px 0 0 13px; }
.side { width: 325px; border-left: 1px solid #a9c9e2; background: #d2e2ec; display: flex; flex-direction: column; }
.info { height: 112px; border-bottom: 1px solid #a9c9e2; padding: 20px 0 0 18px; line-height: 24.500px; letter-spacing: -0.16px; color: #222; white-space: nowrap; }
.sl { height: 37.600px; line-height: 38px; padding-left: 12px; font-weight: 500; color: #38678a; }
.sl.on { border-left: 3px solid #38678a; padding-left: 13px; color: #0d0d0d; }
.tree { width: 287px; height: 303px; margin: 81px 0 0 18px; background: #fff; border: 1px solid #a9c9e2; border-radius: 3px; display: flex; flex-direction: column; overflow: hidden; }
.treehead { height: 34px; border-bottom: 1px solid #a9c9e2; display: flex; align-items: center; padding: 4px 0 0 11px; }
.treehead svg { width: 18px; height: 18px; }
.treehead a { margin-left: 7px; }
.treehead .tri { width: 11px; height: 8px; margin-left: 8px; }
.treeitem { display: flex; align-items: center; height: 26px; padding-left: 10px; color: #000; font-size: 16px; white-space: nowrap; }
.treeitem i { flex: none; width: 9px; height: 11px; border: dotted #a9c9e2; border-width: 0 0 1px 1px; margin-top: -8px; }
.treeitem svg { width: 18px; height: 16px; margin: -1px 9px 0 7px; }
.hscroll { margin-top: auto; height: 21px; background: #f0f0f0; display: flex; align-items: center; padding: 0 8px; }
.hscroll b { width: 170px; height: 17px; background: #c1c1c1; margin: 0 auto 0 8px; }
.hscroll .l { border: 5px solid transparent; border-left: 0; border-right-color: #a3a3a3; }
.hscroll .r { border: 5px solid transparent; border-right: 0; border-left-color: #505050; }
.fab { position: absolute; left: 1791px; top: 801px; width: 110px; height: 100px; }
.fabn { font: 500 17px Roboto, sans-serif; fill: #fff; }
.vscroll { width: 21px; background: #f1f1f1; display: flex; flex-direction: column; align-items: center; padding: 9px 0; }
.vscroll b { width: 17px; height: 783px; background: #c1c1c1; margin: 7px 0 auto; }
.vscroll .up { border: 5px solid transparent; border-top: 0; border-bottom-color: #a3a3a3; }
.vscroll .down { border: 5px solid transparent; border-bottom: 0; border-top-color: #505050; }

/* taskbar */
.taskbar { height: 50px; background: #0d0b09; display: flex; align-items: center; position: relative; color: #fff; flex: none; }
.grass { position: absolute; left: 0; top: 0; width: 1920px; height: 50px; }
.apps { display: flex; }
.app { width: 62px; height: 50px; display: flex; align-items: center; justify-content: center; position: relative; }
.app:first-child { margin-left: -1px; }
.app svg { width: 30px; height: 30px; }
.cur { background: rgba(255, 255, 255, .24); border-bottom: 3px solid #76b9ed; padding-top: 3px; }
.run::after { content: ""; position: absolute; left: 6px; bottom: 0; width: 51px; height: 3px; background: #76b9ed; }
.two::after { background: linear-gradient(90deg, #76b9ed 79%, #4f7fa5 79%); }
.adobe { font: 600 14px "Open Sans", sans-serif; fill: #d5f1ff; }
.lr { fill: #31a8ff; }
.wd { font: 700 12px "Open Sans", sans-serif; fill: #fff; }
.tray { width: 144px; height: 24px; margin-left: auto; position: relative; }
.lang { font-size: 15px; letter-spacing: -0.8px; width: 26px; margin-left: 7px; position: relative; }
.clock { width: 70px; margin-left: 18px; display: flex; flex-direction: column; align-items: center; font-size: 14px; line-height: 24px; letter-spacing: -0.2px; position: relative; }
.notif { width: 34px; height: 34px; margin: 0 12px 0 22px; position: relative; }
.nn { font: 400 14px "Open Sans", sans-serif; fill: #fff; }
.peek { width: 1px; height: 50px; background: #555; margin-right: 6px; position: relative; }
```
